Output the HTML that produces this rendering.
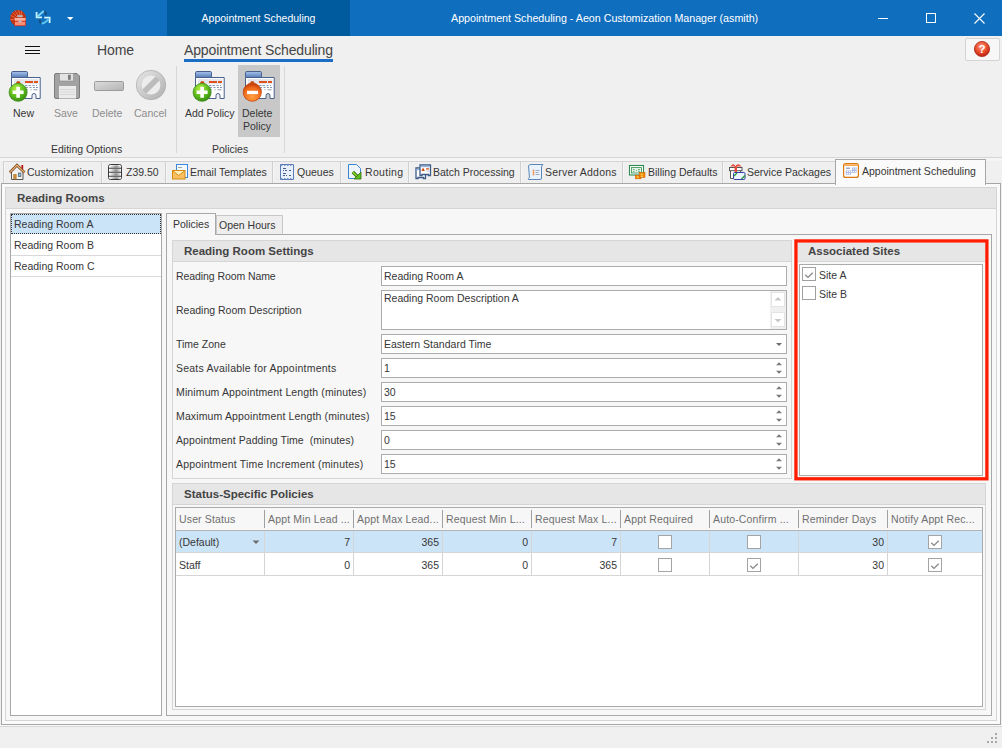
<!DOCTYPE html>
<html><head><meta charset="utf-8">
<style>
*{margin:0;padding:0;box-sizing:border-box}
html,body{width:1002px;height:748px;overflow:hidden;background:#f0f0f0;font-family:"Liberation Sans",sans-serif;font-size:10.5px;color:#363636}
.a{position:absolute}
.t{position:absolute;white-space:pre;line-height:13px;height:13px}
.bx{position:absolute;border:1px solid #ababab;background:#fff}
</style></head><body>
<!-- TITLE BAR -->
<div class="a" style="left:0;top:0;width:1002px;height:36px;background:#106ebe"></div>
<div class="a" style="left:167px;top:0;width:183px;height:36px;background:#005a9e"></div>
<div class="t" style="left:167px;width:183px;text-align:center;top:12px;color:#fff">Appointment Scheduling</div>
<div class="t" style="left:451px;top:12px;color:#fff;font-size:10.7px">Appointment Scheduling - Aeon Customization Manager (asmith)</div>

<!-- RIBBON -->
<div class="a" style="left:0;top:157px;width:1002px;height:1px;background:#d6d6d6"></div>
<div class="a" style="left:25px;top:46px;width:15px;height:1px;background:#111"></div>
<div class="a" style="left:25px;top:49px;width:15px;height:2px;background:#111;height:1px;top:50px"></div>
<div class="a" style="left:25px;top:53px;width:15px;height:1px;background:#111"></div>
<div class="t" style="left:97px;top:42px;font-size:14px;line-height:16px;height:16px;color:#444;letter-spacing:-0.1px">Home</div>
<div class="t" style="left:184px;top:42px;font-size:14px;line-height:16px;height:16px;color:#444;letter-spacing:-0.13px">Appointment Scheduling</div>
<div class="a" style="left:184px;top:59px;width:149px;height:3px;background:#1a6ec6"></div>

<div class="a" style="left:238px;top:65px;width:42px;height:72px;background:#c8c8c8"></div>
<div class="a" style="left:176px;top:66px;width:1px;height:87px;background:#d8d8d8"></div>
<div class="a" style="left:284px;top:66px;width:1px;height:87px;background:#d8d8d8"></div>
<div class="t" style="left:13px;top:107px">New</div>
<div class="t" style="left:54px;top:107px;color:#8c8c8c">Save</div>
<div class="t" style="left:92px;top:107px;color:#8c8c8c">Delete</div>
<div class="t" style="left:134px;top:107px;color:#8c8c8c">Cancel</div>
<div class="t" style="left:185px;top:107px">Add Policy</div>
<div class="t" style="left:242px;top:107px">Delete</div>
<div class="t" style="left:243px;top:120px">Policy</div>
<div class="t" style="left:51px;top:143px">Editing Options</div>
<div class="t" style="left:212px;top:143px">Policies</div>

<div class="a" style="left:965px;top:38px;width:35px;height:23px;border:1px solid #d4d4d4;border-radius:2px;background:#f7f7f7"></div>

<!-- TABS -->
<div class="a" style="left:0;top:158px;width:1002px;height:3px;background:#f5f5f5"></div>
<div class="a" style="left:3px;top:161px;width:832px;height:22px;background:#efefef;border-top:1px solid #d5d5d5"></div>
<div class="a" style="left:3px;top:161px;width:1px;height:22px;background:#cfcfcf"></div>
<div class="a" style="left:4px;top:162px;width:1px;height:21px;background:#f6f6f6"></div>
<div class="t" style="left:27px;top:166px">Customization</div>
<div class="a" style="left:101px;top:161px;width:1px;height:22px;background:#cfcfcf"></div>
<div class="a" style="left:102px;top:162px;width:1px;height:21px;background:#f6f6f6"></div>
<div class="t" style="left:126px;top:166px">Z39.50</div>
<div class="a" style="left:165px;top:161px;width:1px;height:22px;background:#cfcfcf"></div>
<div class="a" style="left:166px;top:162px;width:1px;height:21px;background:#f6f6f6"></div>
<div class="t" style="left:190px;top:166px">Email Templates</div>
<div class="a" style="left:272px;top:161px;width:1px;height:22px;background:#cfcfcf"></div>
<div class="a" style="left:273px;top:162px;width:1px;height:21px;background:#f6f6f6"></div>
<div class="t" style="left:297px;top:166px">Queues</div>
<div class="a" style="left:340px;top:161px;width:1px;height:22px;background:#cfcfcf"></div>
<div class="a" style="left:341px;top:162px;width:1px;height:21px;background:#f6f6f6"></div>
<div class="t" style="left:365px;top:166px;letter-spacing:0.3px">Routing</div>
<div class="a" style="left:408px;top:161px;width:1px;height:22px;background:#cfcfcf"></div>
<div class="a" style="left:409px;top:162px;width:1px;height:21px;background:#f6f6f6"></div>
<div class="t" style="left:433px;top:166px">Batch Processing</div>
<div class="a" style="left:520px;top:161px;width:1px;height:22px;background:#cfcfcf"></div>
<div class="a" style="left:521px;top:162px;width:1px;height:21px;background:#f6f6f6"></div>
<div class="t" style="left:545px;top:166px;letter-spacing:0.22px">Server Addons</div>
<div class="a" style="left:622px;top:161px;width:1px;height:22px;background:#cfcfcf"></div>
<div class="a" style="left:623px;top:162px;width:1px;height:21px;background:#f6f6f6"></div>
<div class="t" style="left:648px;top:166px">Billing Defaults</div>
<div class="a" style="left:722px;top:161px;width:1px;height:22px;background:#cfcfcf"></div>
<div class="a" style="left:723px;top:162px;width:1px;height:21px;background:#f6f6f6"></div>
<div class="t" style="left:747px;top:166px">Service Packages</div>

<!-- CONTENT OUTER -->
<div class="a" style="left:1px;top:183px;width:1000px;height:542px;border:1px solid #a6a6a6;background:#fafafa"></div>
<div class="a" style="left:835px;top:159px;width:151px;height:26px;border:1px solid #a6a6a6;border-bottom:none;background:#fafafa"></div>
<div class="t" style="left:862px;top:165px">Appointment Scheduling</div>


<!-- READING ROOMS GROUP -->
<div class="a" style="left:5px;top:187px;width:992px;height:534px;border:1px solid #d5d5d5;background:#f7f7f7"></div>
<div class="a" style="left:6px;top:188px;width:990px;height:21px;background:#e6e6e6;border-bottom:1px solid #d5d5d5"></div>
<div class="t" style="left:17px;top:192px;font-weight:bold;font-size:11.5px;color:#444">Reading Rooms</div>

<!-- list -->
<div class="bx" style="left:10px;top:213px;width:152px;height:503px;border-color:#a8a8a8"></div>
<div class="a" style="left:11px;top:214px;width:150px;height:20px;background:#cce4f7;border:1px dotted #333"></div>
<div class="a" style="left:11px;top:255px;width:150px;height:1px;background:#d9d9d9"></div>
<div class="a" style="left:11px;top:276px;width:150px;height:1px;background:#d9d9d9"></div>
<div class="t" style="left:14px;top:218px">Reading Room A</div>
<div class="t" style="left:14px;top:239px">Reading Room B</div>
<div class="t" style="left:14px;top:260px">Reading Room C</div>

<!-- tab control -->
<div class="a" style="left:166px;top:234px;width:826px;height:482px;border:1px solid #a8a8a8;background:#f7f7f7"></div>
<div class="a" style="left:216px;top:215px;width:67px;height:20px;border:1px solid #c8c8c8;border-bottom:1px solid #a8a8a8;background:#eeeeee"></div>
<div class="a" style="left:166px;top:213px;width:50px;height:22px;border:1px solid #a8a8a8;border-bottom:none;background:#f7f7f7"></div>
<div class="t" style="left:173px;top:218px">Policies</div>
<div class="t" style="left:219px;top:219px">Open Hours</div>

<!-- settings group -->
<div class="a" style="left:172px;top:240px;width:620px;height:239px;border:1px solid #d5d5d5;background:#f7f7f7"></div>
<div class="a" style="left:173px;top:241px;width:618px;height:21px;background:#e6e6e6;border-bottom:1px solid #d5d5d5"></div>
<div class="t" style="left:184px;top:245px;font-weight:bold;font-size:11.5px;color:#444">Reading Room Settings</div>

<div class="t" style="left:176px;top:270px;letter-spacing:-0.08px">Reading Room Name</div>
<div class="t" style="left:176px;top:304px">Reading Room Description</div>
<div class="t" style="left:176px;top:338px">Time Zone</div>
<div class="t" style="left:176px;top:362px;letter-spacing:0.22px">Seats Available for Appointments</div>
<div class="t" style="left:176px;top:386px;letter-spacing:0.13px">Minimum Appointment Length (minutes)</div>
<div class="t" style="left:176px;top:410px;letter-spacing:0.14px">Maximum Appointment Length (minutes)</div>
<div class="t" style="left:176px;top:434px;letter-spacing:0.07px">Appointment Padding Time  (minutes)</div>
<div class="t" style="left:176px;top:458px;letter-spacing:0.18px">Appointment Time Increment (minutes)</div>

<div class="bx" style="left:381px;top:266px;width:406px;height:20px"></div>
<div class="bx" style="left:381px;top:290px;width:406px;height:40px"></div>
<div class="bx" style="left:381px;top:334px;width:406px;height:20px"></div>
<div class="bx" style="left:381px;top:358px;width:406px;height:20px"></div>
<div class="bx" style="left:381px;top:382px;width:406px;height:20px"></div>
<div class="bx" style="left:381px;top:406px;width:406px;height:20px"></div>
<div class="bx" style="left:381px;top:430px;width:406px;height:20px"></div>
<div class="bx" style="left:381px;top:454px;width:406px;height:20px"></div>
<div class="t" style="left:384px;top:270px">Reading Room A</div>
<div class="t" style="left:384px;top:292px">Reading Room Description A</div>
<div class="t" style="left:384px;top:338px">Eastern Standard Time</div>
<div class="t" style="left:384px;top:362px">1</div>
<div class="t" style="left:384px;top:386px">30</div>
<div class="t" style="left:384px;top:410px">15</div>
<div class="t" style="left:384px;top:434px">0</div>
<div class="t" style="left:384px;top:458px">15</div>

<!-- associated sites -->
<div class="a" style="left:795px;top:240px;width:193px;height:240px;background:#f7f7f7"></div>
<div class="a" style="left:798px;top:243px;width:187px;height:19px;background:#e6e6e6;border-bottom:1px solid #d5d5d5"></div>
<div class="t" style="left:808px;top:245px;font-weight:bold;font-size:11.5px;color:#444">Associated Sites</div>
<div class="bx" style="left:799px;top:264px;width:184px;height:212px"></div>
<div class="a" style="left:802px;top:267px;width:14px;height:14px;border:1px solid #a0a0a0;background:#fff"></div>
<div class="a" style="left:802px;top:286px;width:14px;height:14px;border:1px solid #a0a0a0;background:#fff"></div>
<div class="t" style="left:819px;top:269px">Site A</div>
<div class="t" style="left:819px;top:288px">Site B</div>

<svg class="a" style="left:0;top:0" width="1002" height="748"><rect x="795.95" y="240.95" width="190.95" height="237.85" fill="none" stroke="#ff1c00" stroke-width="3.3"/></svg>
<!-- status group -->
<div class="a" style="left:172px;top:483px;width:814px;height:227px;border:1px solid #d5d5d5;background:#f7f7f7"></div>
<div class="a" style="left:173px;top:484px;width:812px;height:21px;background:#e6e6e6;border-bottom:1px solid #d5d5d5"></div>
<div class="t" style="left:184px;top:488px;font-weight:bold;font-size:11.5px;color:#444">Status-Specific Policies</div>
<div class="bx" style="left:175px;top:507px;width:808px;height:200px"></div>
<div class="a" style="left:176px;top:508px;width:806px;height:23px;background:#f7f7f7;border-bottom:1px solid #b4b4b4"></div>
<div class="a" style="left:176px;top:531px;width:806px;height:22px;background:#cce4f7;border-bottom:1px solid #d5d5d5"></div>
<div class="a" style="left:176px;top:554px;width:806px;height:22px;background:#fff;border-bottom:1px solid #d5d5d5"></div>

<div class="a" style="left:264px;top:510px;width:1px;height:18px;background:#a0a0a0"></div>
<div class="a" style="left:264px;top:531px;width:1px;height:45px;background:#d5d5d5"></div>
<div class="a" style="left:353px;top:510px;width:1px;height:18px;background:#a0a0a0"></div>
<div class="a" style="left:353px;top:531px;width:1px;height:45px;background:#d5d5d5"></div>
<div class="a" style="left:442px;top:510px;width:1px;height:18px;background:#a0a0a0"></div>
<div class="a" style="left:442px;top:531px;width:1px;height:45px;background:#d5d5d5"></div>
<div class="a" style="left:531px;top:510px;width:1px;height:18px;background:#a0a0a0"></div>
<div class="a" style="left:531px;top:531px;width:1px;height:45px;background:#d5d5d5"></div>
<div class="a" style="left:620px;top:510px;width:1px;height:18px;background:#a0a0a0"></div>
<div class="a" style="left:620px;top:531px;width:1px;height:45px;background:#d5d5d5"></div>
<div class="a" style="left:709px;top:510px;width:1px;height:18px;background:#a0a0a0"></div>
<div class="a" style="left:709px;top:531px;width:1px;height:45px;background:#d5d5d5"></div>
<div class="a" style="left:798px;top:510px;width:1px;height:18px;background:#a0a0a0"></div>
<div class="a" style="left:798px;top:531px;width:1px;height:45px;background:#d5d5d5"></div>
<div class="a" style="left:887px;top:510px;width:1px;height:18px;background:#a0a0a0"></div>
<div class="a" style="left:887px;top:531px;width:1px;height:45px;background:#d5d5d5"></div>
<div class="t g" style="left:179px;top:513px;color:#6f6f6f;letter-spacing:0.15px">User Status</div>
<div class="t g" style="left:268px;top:513px;color:#6f6f6f;letter-spacing:0.15px">Appt Min Lead ...</div>
<div class="t g" style="left:357px;top:513px;color:#6f6f6f;letter-spacing:0.15px">Appt Max Lead...</div>
<div class="t g" style="left:446px;top:513px;color:#6f6f6f;letter-spacing:0.15px">Request Min L...</div>
<div class="t g" style="left:535px;top:513px;color:#6f6f6f;letter-spacing:0.15px">Request Max L...</div>
<div class="t g" style="left:624px;top:513px;color:#6f6f6f;letter-spacing:0.15px">Appt Required</div>
<div class="t g" style="left:713px;top:513px;color:#6f6f6f;letter-spacing:0.15px">Auto-Confirm ...</div>
<div class="t g" style="left:802px;top:513px;color:#6f6f6f;letter-spacing:0.15px">Reminder Days</div>
<div class="t g" style="left:891px;top:513px;color:#6f6f6f;letter-spacing:0.15px">Notify Appt Rec...</div>
<div class="t" style="left:179px;top:536px">(Default)</div>
<div class="t" style="left:264px;width:86px;text-align:right;top:536px">7</div>
<div class="t" style="left:353px;width:86px;text-align:right;top:536px">365</div>
<div class="t" style="left:442px;width:86px;text-align:right;top:536px">0</div>
<div class="t" style="left:531px;width:86px;text-align:right;top:536px">7</div>
<div class="a" style="left:658px;top:535px;width:14px;height:14px;border:1px solid #a4a4a4;background:#fff"></div>
<div class="a" style="left:747px;top:535px;width:14px;height:14px;border:1px solid #a4a4a4;background:#fff"></div>
<div class="t" style="left:798px;width:86px;text-align:right;top:536px">30</div>
<div class="a" style="left:928px;top:535px;width:14px;height:14px;border:1px solid #a4a4a4;background:#fff"></div><svg class="a" style="left:928px;top:535px" width="14" height="14"><path d="M3.3 7.8 L6 10.4 L10.7 5.8" fill="none" stroke="#888" stroke-width="1.3"/></svg>
<div class="t" style="left:179px;top:559px">Staff</div>
<div class="t" style="left:264px;width:86px;text-align:right;top:559px">0</div>
<div class="t" style="left:353px;width:86px;text-align:right;top:559px">365</div>
<div class="t" style="left:442px;width:86px;text-align:right;top:559px">0</div>
<div class="t" style="left:531px;width:86px;text-align:right;top:559px">365</div>
<div class="a" style="left:658px;top:558px;width:14px;height:14px;border:1px solid #a4a4a4;background:#fff"></div>
<div class="a" style="left:747px;top:558px;width:14px;height:14px;border:1px solid #a4a4a4;background:#fff"></div><svg class="a" style="left:747px;top:558px" width="14" height="14"><path d="M3.3 7.8 L6 10.4 L10.7 5.8" fill="none" stroke="#888" stroke-width="1.3"/></svg>
<div class="t" style="left:798px;width:86px;text-align:right;top:559px">30</div>
<div class="a" style="left:928px;top:558px;width:14px;height:14px;border:1px solid #a4a4a4;background:#fff"></div><svg class="a" style="left:928px;top:558px" width="14" height="14"><path d="M3.3 7.8 L6 10.4 L10.7 5.8" fill="none" stroke="#888" stroke-width="1.3"/></svg>
<svg class="a" style="left:252px;top:540px" width="8" height="5"><path d="M0.5 0.5 L7.5 0.5 L4 4 Z" fill="#6d6d6d"/></svg>

<!-- memo scroll -->
<div class="a" style="left:770px;top:291px;width:16px;height:38px;background:#f0f0f0"></div>
<div class="a" style="left:771px;top:292px;width:14px;height:15px;background:#fff;border:1px solid #e4e4e4"></div>
<div class="a" style="left:771px;top:312px;width:14px;height:15px;background:#fff;border:1px solid #e4e4e4"></div>
<svg class="a" style="left:770px;top:290px" width="16" height="40"><path d="M4.5 10.5 H11.5 L8 7 Z" fill="#c8c8c8"/><path d="M4.5 29 H11.5 L8 32.5 Z" fill="#c8c8c8"/></svg>
<!-- combo arrow -->
<svg class="a" style="left:774px;top:340px" width="10" height="8"><path d="M2 3 H8 L5 6 Z" fill="#6d6d6d"/></svg>
<svg class="a" style="left:774px;top:358px" width="10" height="20"><path d="M2 7.2 H8 L5 4.2 Z M2 12.8 H8 L5 15.8 Z" fill="#7a7a7a"/></svg>
<svg class="a" style="left:774px;top:382px" width="10" height="20"><path d="M2 7.2 H8 L5 4.2 Z M2 12.8 H8 L5 15.8 Z" fill="#7a7a7a"/></svg>
<svg class="a" style="left:774px;top:406px" width="10" height="20"><path d="M2 7.2 H8 L5 4.2 Z M2 12.8 H8 L5 15.8 Z" fill="#7a7a7a"/></svg>
<svg class="a" style="left:774px;top:430px" width="10" height="20"><path d="M2 7.2 H8 L5 4.2 Z M2 12.8 H8 L5 15.8 Z" fill="#7a7a7a"/></svg>
<svg class="a" style="left:774px;top:454px" width="10" height="20"><path d="M2 7.2 H8 L5 4.2 Z M2 12.8 H8 L5 15.8 Z" fill="#7a7a7a"/></svg>
<svg class="a" style="left:802px;top:267px" width="14" height="14"><path d="M3.3 7.8 L6 10.4 L10.7 5.8" fill="none" stroke="#888" stroke-width="1.3"/></svg>
<!-- grip -->
<div class="a" style="left:995px;top:733px;width:2px;height:2px;background:#a8a8a8"></div>
<div class="a" style="left:991px;top:737px;width:2px;height:2px;background:#a8a8a8"></div>
<div class="a" style="left:995px;top:737px;width:2px;height:2px;background:#a8a8a8"></div>
<div class="a" style="left:987px;top:741px;width:2px;height:2px;background:#a8a8a8"></div>
<div class="a" style="left:991px;top:741px;width:2px;height:2px;background:#a8a8a8"></div>
<div class="a" style="left:995px;top:741px;width:2px;height:2px;background:#a8a8a8"></div>
<!-- status bar -->
<div class="a" style="left:0;top:725px;width:1002px;height:1px;background:#fafafa"></div>
<div class="a" style="left:0;top:726px;width:1002px;height:1px;background:#d6d6d6"></div>

<svg class="a" style="left:0;top:0;pointer-events:none" width="1002" height="748">
<defs>
 <linearGradient id="tabg" x1="0" y1="0" x2="0" y2="1"><stop offset="0" stop-color="#a9c4ec"/><stop offset="1" stop-color="#4d75b3"/></linearGradient>
 <radialGradient id="grn" cx="0.4" cy="0.3" r="0.7"><stop offset="0" stop-color="#b8f040"/><stop offset="0.6" stop-color="#5cbc1c"/><stop offset="1" stop-color="#3a9010"/></radialGradient>
 <radialGradient id="org" cx="0.5" cy="0.75" r="0.7"><stop offset="0" stop-color="#ffa040"/><stop offset="0.7" stop-color="#f06a1c"/><stop offset="1" stop-color="#c8400c"/></radialGradient>
 <radialGradient id="red" cx="0.45" cy="0.35" r="0.65"><stop offset="0" stop-color="#ff9a80"/><stop offset="0.6" stop-color="#e84a2a"/><stop offset="1" stop-color="#b82010"/></radialGradient>
 <linearGradient id="srv" x1="0" y1="0" x2="1" y2="0"><stop offset="0" stop-color="#ffffff"/><stop offset="0.6" stop-color="#8a8a8a"/><stop offset="1" stop-color="#e8e8e8"/></linearGradient>
 <linearGradient id="cang" x1="0" y1="0" x2="1" y2="1"><stop offset="0" stop-color="#e2e2e2"/><stop offset="1" stop-color="#b4b4b4"/></linearGradient>
 <linearGradient id="cang2" x1="0" y1="0" x2="1" y2="1" gradientUnits="userSpaceOnUse" x1="143" y1="78" x2="159" y2="92"><stop offset="0" stop-color="#d8d8d8"/><stop offset="1" stop-color="#bcbcbc"/></linearGradient>
 <linearGradient id="barg" x1="0" y1="0" x2="1" y2="1"><stop offset="0" stop-color="#dcdcdc"/><stop offset="1" stop-color="#b4b4b4"/></linearGradient>
 <g id="card">
  <rect x="0.5" y="0.5" width="16" height="6.5" rx="1.2" fill="url(#tabg)" stroke="#47618d"/>
  <path d="M0.5 6.5 H29.2 V27.5 H25 V24.5 A2 2 0 0 0 21 24.5 V27.5 H0.5 Z" fill="#fff" stroke="#47618d"/>
  <rect x="3" y="8" width="24.5" height="5" fill="#e4e8ee"/>
  <path d="M4.8 12.5 L6 10.2 H8.6 L9.8 12.5 Z" fill="#d0480e"/>
  <rect x="14" y="10" width="8" height="2" fill="#e0521c"/>
  <rect x="23" y="10" width="4" height="2" fill="#e0521c"/>
  <path d="M14 14.5h2.5M17.5 14.5h2.5M21.5 14.5h2M25 14.5h1M14 16.5h3M18.5 16.5h2M22 16.5h2M25 16.5h2M14 18.7h3M19.5 18.7h1M22.5 18.7h4" stroke="#8a9ab5" stroke-width="1.1"/>
 </g>
</defs>
<!-- title bar icons -->
<circle cx="18" cy="18" r="7.9" fill="#c3320c"/>
<path d="M12.5 12.5 L17 17 M15 10.8 L18.5 16 M18.5 10.3 L20 15.5 M10.6 15.5 L16 18 M10.3 19.5 L15 19.8 M21.5 10.8 L21.3 15" stroke="#e8785a" stroke-width="0.8"/>
<rect x="17.3" y="15.2" width="5.4" height="2.2" fill="#b8bcc0"/>
<rect x="14.6" y="18" width="11" height="7.8" fill="#fa8e74" stroke="#c42a18" stroke-width="0.7"/>
<rect x="14.6" y="18" width="11" height="2" fill="#fcb09a"/>
<rect x="14.6" y="21" width="11" height="0.9" fill="#c83a28"/>
<ellipse cx="20" cy="21.5" rx="1.9" ry="1.1" fill="#b8c0c4"/>
<path d="M44 11.2 Q46.8 12.5 45.6 15.2" fill="none" stroke="#1a4a78" stroke-width="1.6"/>
<path d="M41.5 23.6 Q39 22.2 40.3 19.6" fill="none" stroke="#1a4a78" stroke-width="1.6"/>
<path d="M36.6 12 V17.4 H42" fill="none" stroke="#c8f4ff" stroke-width="1.8"/>
<path d="M37.2 16.8 L43.8 11" fill="none" stroke="#7ad8f8" stroke-width="2"/>
<path d="M44.2 17.6 H49.6 V23" fill="none" stroke="#d8f8ff" stroke-width="1.8"/>
<path d="M49 18.2 Q46 22.8 41.5 23.6" fill="none" stroke="#5cc4ee" stroke-width="2"/>
<path d="M67 17 H73.5 L70.25 20.2 Z" fill="#fff"/>
<rect x="878" y="18" width="10" height="1" fill="#fff"/>
<rect x="926.5" y="13.5" width="9" height="9" fill="none" stroke="#fff"/>
<path d="M974.5 13.5 L984.5 23.5 M984.5 13.5 L974.5 23.5" stroke="#fff" stroke-width="1.1"/>
<!-- help -->
<circle cx="982" cy="49" r="7.6" fill="url(#red)" stroke="#a82818" stroke-width="0.8"/>
<text x="982" y="53.2" font-family="Liberation Sans" font-size="11.5" font-weight="bold" fill="#fff" text-anchor="middle">?</text>
<!-- ribbon -->
<use href="#card" x="11" y="71"/>
<circle cx="18.1" cy="92.3" r="9" fill="url(#grn)" stroke="#3e8a18" stroke-width="0.8"/>
<path d="M16.3 86.8h3.6v3.7h3.7v3.6h-3.7v3.7h-3.6v-3.7h-3.7v-3.6h3.7z" fill="#fff"/>
<path d="M54.5 75 Q54.5 73.5 56 73.5 H77 L79.5 76 V97 Q79.5 98.5 78 98.5 H56 Q54.5 98.5 54.5 97 Z" fill="#a2a2a2" stroke="#7c7c7c"/>
<rect x="59.5" y="73.5" width="14" height="7.5" fill="#e2e2e2" stroke="#8a8a8a" stroke-width="0.6"/>
<rect x="68" y="74.8" width="2.8" height="5" fill="#7a7a7a"/>
<rect x="59" y="86" width="17" height="12.5" fill="#ebebeb"/>
<path d="M60 89.5h15M60 92h15M60 94.5h15" stroke="#cfcfcf" stroke-width="0.8"/>
<rect x="94.5" y="81.5" width="29" height="9" rx="1" fill="url(#barg)" stroke="#9c9c9c"/>
<circle cx="151" cy="85" r="12" fill="#ececec"/>
<path d="M141.5 94.5 L160.5 75.5" stroke="url(#cang2)" stroke-width="5.6"/>
<circle cx="151" cy="85" r="12.1" fill="none" stroke="url(#cang)" stroke-width="5.4"/>
<circle cx="151" cy="85" r="14.7" fill="none" stroke="#a9a9a9" stroke-width="0.7"/>
<use href="#card" x="195" y="71"/>
<circle cx="202.1" cy="92.3" r="9" fill="url(#grn)" stroke="#3e8a18" stroke-width="0.8"/>
<path d="M200.3 86.8h3.6v3.7h3.7v3.6h-3.7v3.7h-3.6v-3.7h-3.7v-3.6h3.7z" fill="#fff"/>
<use href="#card" x="245" y="71"/>
<circle cx="252.3" cy="92.2" r="9.1" fill="url(#org)" stroke="#c04a10" stroke-width="0.8"/>
<rect x="247" y="90.8" width="11" height="3.3" fill="#fff"/>
<!-- tab icons -->
<path d="M11.5 172 V179.5 H23 V172" fill="#f4f4f4" stroke="#555" stroke-width="1"/>
<rect x="13.2" y="174" width="3.5" height="5.2" fill="#c58a3c"/>
<rect x="18.3" y="173" width="2.6" height="3.6" fill="#7cc0f0" stroke="#555" stroke-width="0.7"/>
<rect x="21.4" y="165" width="1.8" height="4.5" fill="#c01010"/>
<path d="M9.8 172.5 L17 165.2 L24.5 172.5" fill="none" stroke="#6a4020" stroke-width="2.6"/>
<path d="M9.8 172.5 L17 165.2 L24.5 172.5" fill="none" stroke="#f0b070" stroke-width="1.2"/>
<rect x="108.5" y="164.5" width="13" height="15" rx="2" fill="#fff" stroke="#3a3a3a"/>
<rect x="109.5" y="165.5" width="11" height="2.2" fill="url(#srv)"/>
<rect x="109.5" y="169.2" width="11" height="2.5" fill="url(#srv)"/>
<rect x="109.5" y="173.2" width="11" height="2.5" fill="url(#srv)"/>
<rect x="109.5" y="177.2" width="11" height="1.8" fill="url(#srv)"/>
<path d="M108.5 168.2h13M108.5 172.2h13M108.5 176.2h13" stroke="#3a3a3a" stroke-width="1.1"/>
<rect x="176.5" y="164.5" width="11" height="13" fill="#f4f8ff" stroke="#3a88e0"/>
<rect x="178" y="167" width="4" height="0.9" fill="#999"/>
<rect x="172.5" y="170.5" width="12.5" height="8.5" fill="#f8c060" stroke="#d88a10"/>
<path d="M173 171 L178.7 175.5 L184.5 171" fill="#fff0c0" stroke="#d88a10" stroke-width="1"/>
<path d="M280.5 164.5 H293.5 V179.5 H280.5 Z" fill="#e8f0fc" stroke="#5a7cb5"/>
<path d="M281 165h12M281 179h12" stroke="#5a7cb5" stroke-width="1.4" stroke-dasharray="1.5 1.5"/>
<path d="M283 168.5h3M283 170.5h1M285 170.5h2M289 170.5h2M283 173.5h3M283 175.5h2M286 175.5h1M289 175.5h2" stroke="#4a5f88" stroke-width="1"/>
<path d="M348.5 164.5 H356.5 L360.5 168.5 V178.5 H348.5 Z" fill="#eef5fd" stroke="#3a86cf"/>
<path d="M352.8 172 L358 177.2" stroke="#2e6a10" stroke-width="3.2"/>
<path d="M352.8 172 L358 177.2" stroke="#8adc20" stroke-width="1.6"/>
<path d="M354 179 H361 V172 Z" fill="#5cc018" stroke="#2e6a10" stroke-width="0.8"/>
<path d="M416 168 H425.5 V178.5 H423.5 V177.5 H418 V178.5 H416 Z" fill="#fff" stroke="#3d5a88" stroke-width="1.3"/>
<rect x="416.6" y="168.6" width="8.3" height="1.6" fill="#9ab4dc"/>
<path d="M420 165 H430.5 V175.5 H428.5 V174.5 H422 V175.5 H420 Z" fill="#fff" stroke="#3d5a88" stroke-width="1.3"/>
<rect x="420.6" y="165.6" width="9.3" height="1.6" fill="#9ab4dc"/>
<path d="M421.5 171 L422.6 168.3 H423.6 L424.8 171 Z" fill="#d04a10"/>
<rect x="426" y="168.3" width="3" height="1.2" fill="#d04a10"/>
<path d="M426.5 171h1M428.3 171h1" stroke="#8a9ab5" stroke-width="1"/>
<path d="M528.5 166 Q529 164.5 531 164.5 H543 Q541.5 166 541.5 167 V178 Q541.5 179.5 540 179.5 H528.5 Q527.5 178.5 529.5 177.5 Z" fill="#eaf3fd" stroke="#5b86b8"/>
<circle cx="533.5" cy="170.5" r="0.9" fill="#f08a40"/><circle cx="533.5" cy="172.5" r="0.9" fill="#f08a40"/><circle cx="533.5" cy="174.5" r="0.9" fill="#f08a40"/>
<path d="M535.5 170.5h4M535.5 172.5h3M535.5 174.5h4" stroke="#8a9ab5" stroke-width="0.8"/>
<rect x="629.5" y="165.5" width="14" height="9.5" fill="#fff" stroke="#2e8b4e" stroke-width="1.1"/>
<rect x="631.6" y="167.6" width="9.8" height="5.4" fill="#e4f2e8" stroke="#2e8b4e" stroke-width="0.8"/>
<path d="M633 169.5h1.5M633 171.3h1.5M636 170.4h1M638 169.5h2M638 171.3h2" stroke="#5aa870" stroke-width="0.9"/>
<rect x="635.5" y="175.2" width="5.5" height="3.6" fill="#f08a00" stroke="#d86000" stroke-width="0.6"/>
<rect x="639.5" y="172.6" width="5.5" height="4.8" fill="#f08a00" stroke="#d86000" stroke-width="0.6"/>
<path d="M636.8 177h2M640.8 174.3h2M640.8 176.3h2" stroke="#fff080" stroke-width="0.9"/>
<path d="M730.5 170.5 V178.5 H740.5 V170.5" fill="#fff" stroke="#555"/>
<rect x="729.5" y="167.5" width="12.5" height="3.2" fill="#fff" stroke="#555"/>
<rect x="734.6" y="166" width="2.4" height="6" fill="#e84a3a"/>
<path d="M731 166.5 Q733 163 735.5 166.5 Q738.5 163 741 166.5" fill="#f06050" stroke="#e03a2a" stroke-width="1"/>
<rect x="733.5" y="172.5" width="11.5" height="7" rx="1.2" fill="#eaf4ff" stroke="#3a3aa8"/>
<path d="M734 176 L737 173M741.5 179 L745 175.5" stroke="#1a9a2a" stroke-width="1.2"/>
<rect x="843.6" y="163.6" width="14.8" height="13.8" rx="2" fill="#fff" stroke="#dc7a10" stroke-width="1.2"/>
<rect x="844.4" y="164.4" width="13.2" height="1.6" fill="#f5a850"/>
<path d="M845.6 167.2 H856.8 V175 H845.6 Z" fill="#fff"/>
<path d="M852 167.5 H856.6 V172.8 H851 V174.8 H845.8 V170.5 H852 Z" fill="#a9bbe2"/>
<rect x="846" y="167.6" width="4" height="1.2" fill="#7d92c4"/>
<path d="M853 169h1.2M855 169h1.2M846.8 171.5h1.2M848.8 171.5h1.2M850.8 171.5h1.2M852.8 171.5h1.2M854.8 171.5h1.2M846.8 173.6h1.2M848.8 173.6h1.2" stroke="#fff" stroke-width="1.2"/>
</svg>

</body></html>
